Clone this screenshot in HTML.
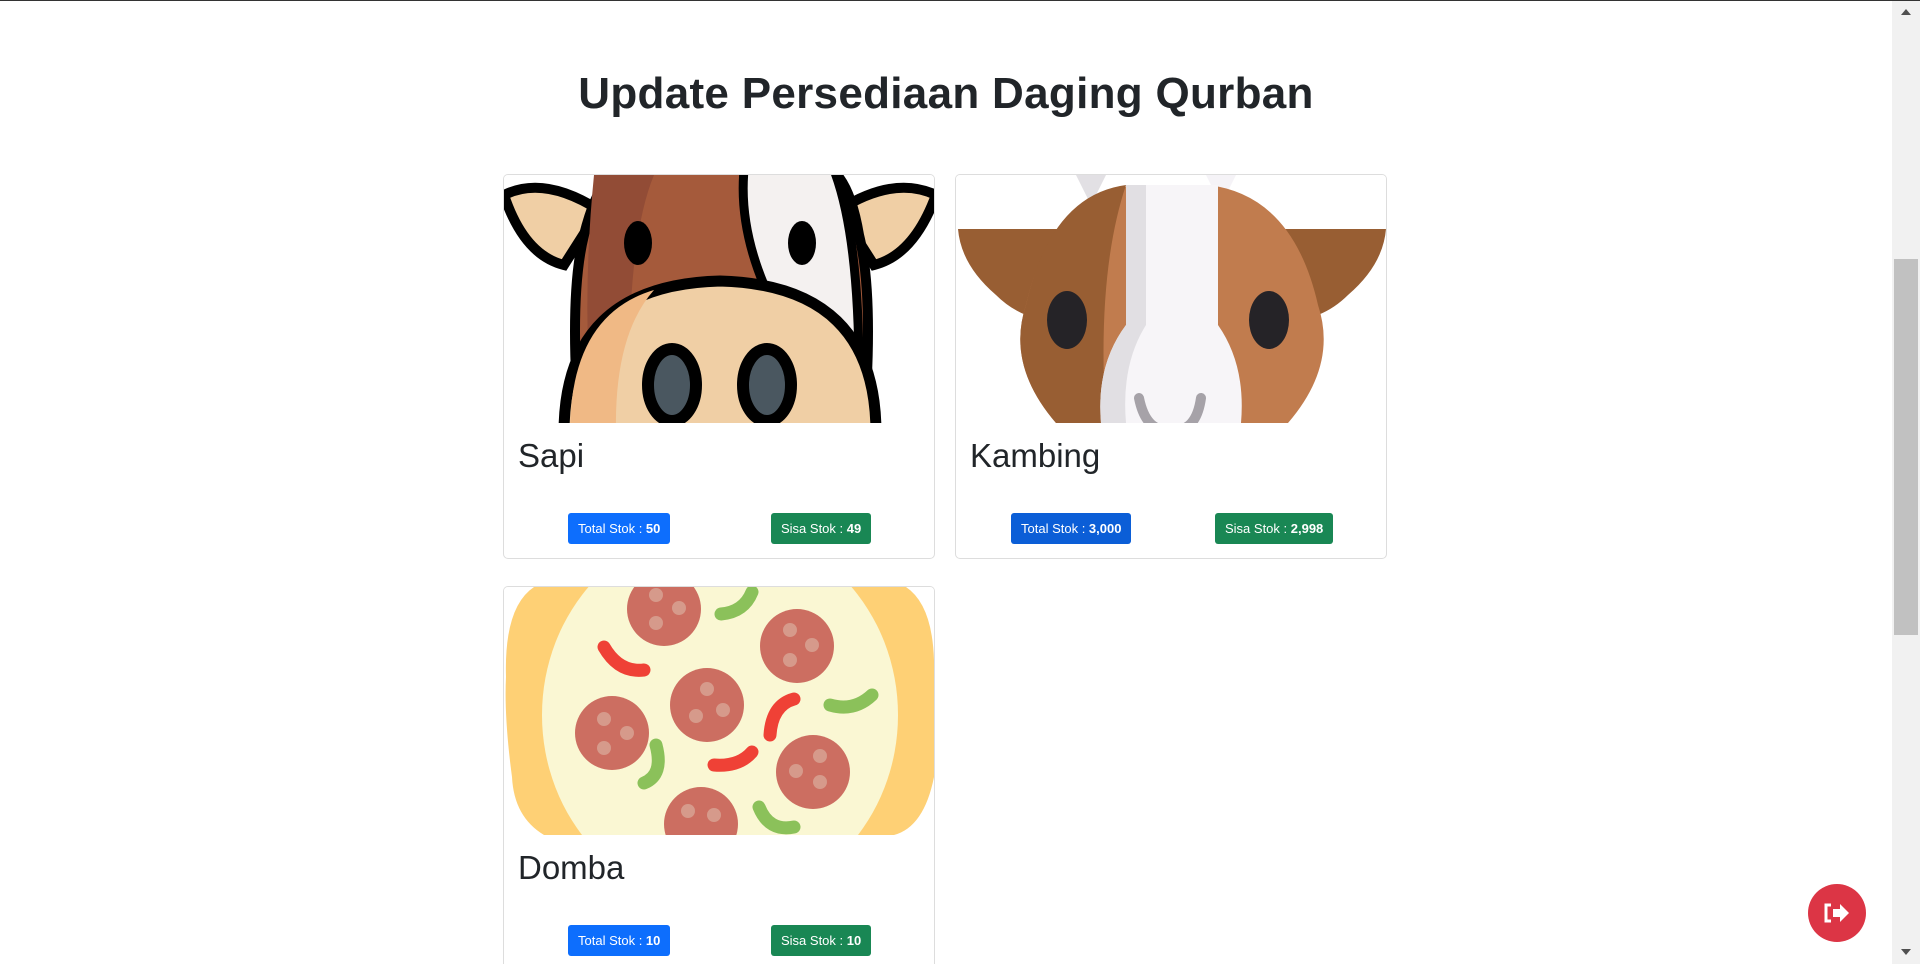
<!DOCTYPE html>
<html><head><meta charset="utf-8"><style>
*{box-sizing:border-box;margin:0;padding:0}
html{width:1920px;height:964px;overflow:hidden}
body{width:1920px;height:964px;overflow:hidden;background:#fff;font-family:"Liberation Sans",sans-serif;color:#212529;position:relative;border-top:1px solid #333}
h1{position:absolute;top:68px;left:0;width:1892px;text-align:center;font-size:44px;font-weight:bold;letter-spacing:0.3px}
.card{position:absolute;width:432px;border:1px solid #ddd;border-radius:5px;overflow:hidden;background:#fff}
.card svg{display:block}
.ct{font-size:33px;margin:14px 0 0 14px;height:80px}
.b{position:absolute;top:338px;height:31px;line-height:31px;color:#fff;font-size:13px;border-radius:3px;padding:0 10px}
.b strong{font-weight:bold}
.blue{background:#0d6efd}.green{background:#198754}
.sb{position:absolute;right:0;top:0;width:28px;height:964px;background:#f1f1f1}
.th{position:absolute;right:2px;top:258px;width:24px;height:376px;background:#c1c1c1}
.fab{position:absolute;left:1808px;top:883px;width:58px;height:58px;border-radius:50%;background:#dc3545}
</style></head><body>
<h1>Update Persediaan Daging Qurban</h1>

<div class="card" style="left:503px;top:173px;height:385px">
<svg width="432" height="248" viewBox="0 0 432 248">
<rect width="432" height="248" fill="#fff"/>
<path d="M0 20 Q40 0 95 35 L60 90 Q20 80 0 20Z" fill="#f0cfa5" stroke="#000" stroke-width="10"/>
<path d="M432 20 Q390 0 335 35 L370 90 Q410 80 432 20Z" fill="#f0cfa5" stroke="#000" stroke-width="10"/>
<path d="M75 248 Q65 120 80 60 Q95 0 120 -10 L320 -10 Q345 0 355 60 Q370 120 360 248Z" fill="#a55a3b" stroke="#000" stroke-width="10"/>
<path d="M90 0 L150 0 Q125 60 125 200 L85 200 Q80 100 90 0Z" fill="#924c36"/>
<path d="M240 -5 L330 -5 Q355 60 355 200 L340 200 L260 110 Q235 50 240 -5Z" fill="#f4f1f0" stroke="#000" stroke-width="9"/>
<ellipse cx="134" cy="68" rx="14" ry="22" fill="#000"/>
<ellipse cx="298" cy="68" rx="14" ry="22" fill="#000"/>
<path d="M60 258 Q60 110 216 106 Q372 110 372 258Z" fill="#f0cfa5" stroke="#000" stroke-width="11"/>
<path d="M66 258 Q66 140 150 115 Q110 160 112 258Z" fill="#f0b985"/>
<ellipse cx="168" cy="210" rx="24" ry="36" fill="#4a5760" stroke="#000" stroke-width="12"/>
<ellipse cx="263" cy="210" rx="24" ry="36" fill="#4a5760" stroke="#000" stroke-width="12"/>
</svg>
<div class="ct">Sapi</div>
<div class="b blue" style="left:64px">Total Stok : <strong>50</strong></div>
<div class="b green" style="left:267px">Sisa Stok : <strong>49</strong></div>
</div>

<div class="card" style="left:955px;top:173px;height:385px">
<svg width="432" height="248" viewBox="0 0 432 248">
<rect width="432" height="248" fill="#fff"/>
<path d="M120 0 L135 30 L150 0Z" fill="#e2e0e4"/>
<path d="M250 0 L265 30 L280 0Z" fill="#f5f3f7"/>
<path d="M2 54 L130 54 L150 140 Q80 160 40 120 Q5 90 2 54Z" fill="#985e33"/>
<path d="M430 54 L302 54 L282 140 Q352 160 392 120 Q427 90 430 54Z" fill="#985e33"/>
<path d="M100 248 Q50 190 70 130 Q95 20 180 10 L252 10 Q337 20 362 130 Q382 190 332 248Z" fill="#c17c4e"/>
<path d="M100 248 Q50 190 70 130 Q95 20 170 10 Q140 100 150 248Z" fill="#985e33"/>
<path d="M170 10 L262 10 L262 150 Q290 190 285 248 L145 248 Q140 190 170 150Z" fill="#f7f5f8"/>
<path d="M170 10 L190 10 L190 150 Q165 190 170 248 L145 248 Q140 190 170 150Z" fill="#e1dfe3"/>
<ellipse cx="111" cy="145" rx="20" ry="29" fill="#252327"/>
<ellipse cx="313" cy="145" rx="20" ry="29" fill="#252327"/>
<path d="M183 223 Q190 258 215 255 Q240 258 245 223" fill="none" stroke="#a6a2a8" stroke-width="10" stroke-linecap="round"/>
</svg>
<div class="ct">Kambing</div>
<div class="b blue" style="left:55px;background:#0b5ed7">Total Stok : <strong>3,000</strong></div>
<div class="b green" style="left:259px">Sisa Stok : <strong>2,998</strong></div>
</div>

<div class="card" style="left:503px;top:585px;height:385px">
<svg width="432" height="248" viewBox="0 0 432 248">
<rect width="432" height="248" fill="#fff"/>
<path d="M30 0 L402 0 Q432 20 430 90 Q432 130 430 190 Q420 240 390 248 L40 248 Q10 230 8 190 Q0 130 2 90 Q0 20 30 0Z" fill="#fed075"/>
<ellipse cx="216" cy="128" rx="178" ry="190" fill="#faf7d3"/>
<g fill="#cc6e61">
<circle cx="160" cy="22" r="37"/><circle cx="293" cy="59" r="37"/><circle cx="203" cy="118" r="37"/>
<circle cx="108" cy="146" r="37"/><circle cx="309" cy="185" r="37"/><circle cx="197" cy="237" r="37"/></g>
<g fill="#d69a8b">
<circle cx="152" cy="8" r="7"/><circle cx="175" cy="21" r="7"/><circle cx="152" cy="36" r="7"/>
<circle cx="286" cy="43" r="7"/><circle cx="308" cy="58" r="7"/><circle cx="286" cy="73" r="7"/>
<circle cx="203" cy="102" r="7"/><circle cx="219" cy="123" r="7"/><circle cx="192" cy="129" r="7"/>
<circle cx="100" cy="132" r="7"/><circle cx="123" cy="146" r="7"/><circle cx="100" cy="161" r="7"/>
<circle cx="316" cy="169" r="7"/><circle cx="292" cy="184" r="7"/><circle cx="316" cy="195" r="7"/>
<circle cx="184" cy="224" r="7"/><circle cx="210" cy="228" r="7"/></g>
<g fill="none" stroke-width="13" stroke-linecap="round">
<path d="M100 60 Q115 86 140 83" stroke="#ef4136"/>
<path d="M290 112 Q268 118 266 148" stroke="#ef4136"/>
<path d="M210 178 Q235 180 248 165" stroke="#ef4136"/>
<path d="M217 27 Q240 25 248 5" stroke="#8bc15a"/>
<path d="M326 118 Q350 125 368 108" stroke="#8bc15a"/>
<path d="M152 158 Q160 188 140 196" stroke="#8bc15a"/>
<path d="M255 220 Q265 245 290 240" stroke="#8bc15a"/>
</g>
</svg>
<div class="ct">Domba</div>
<div class="b blue" style="left:64px">Total Stok : <strong>10</strong></div>
<div class="b green" style="left:267px">Sisa Stok : <strong>10</strong></div>
</div>

<div class="fab"><svg width="58" height="58" viewBox="0 0 58 58"><path d="M25 25 h7 v-5 l9 9 l-9 9 v-5 h-7z" fill="#fff"/><path d="M23 21 h-5 v16 h5" fill="none" stroke="#fff" stroke-width="3"/></svg></div>

<div class="sb"><div class="th"></div>
<svg style="position:absolute;left:9px;top:8px" width="10" height="6"><path d="M0 6 L5 0 L10 6Z" fill="#505050"/></svg>
<svg style="position:absolute;left:9px;top:948px" width="10" height="6"><path d="M0 0 L5 6 L10 0Z" fill="#505050"/></svg>
</div>
</body></html>
